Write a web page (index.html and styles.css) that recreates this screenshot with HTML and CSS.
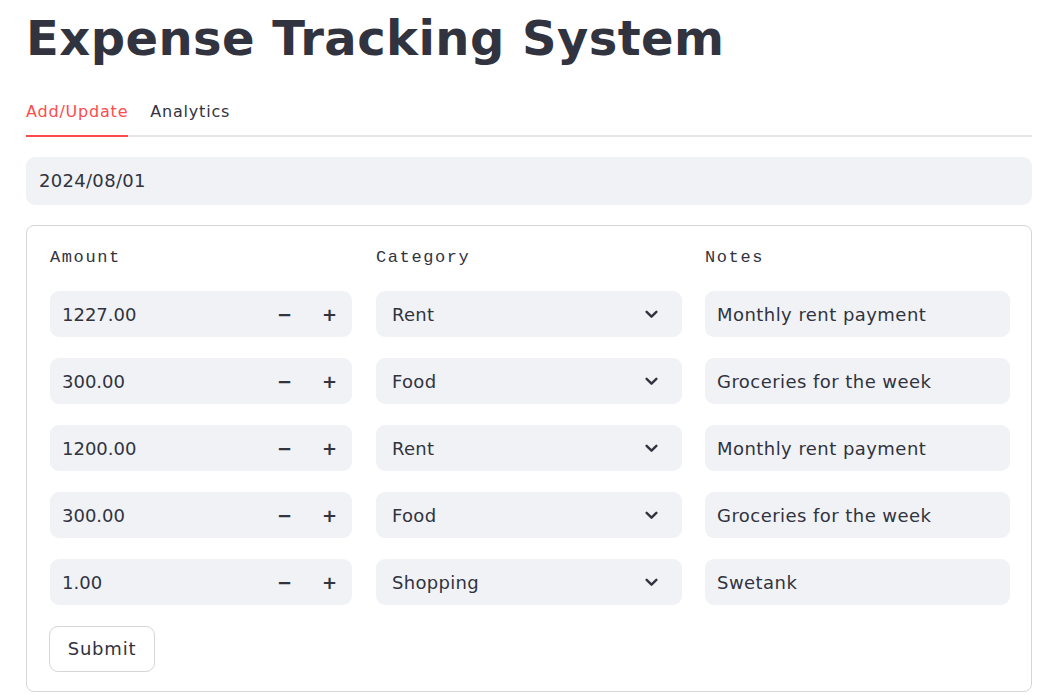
FILE: index.html
```html
<!DOCTYPE html>
<html>
<head>
<meta charset="utf-8">
<link rel="stylesheet" href="styles.css">
</head>
<body>
<div class="main">
  <h1 class="title">Expense Tracking System</h1>
  <div class="tabs">
    <div class="tab active">Add/Update</div>
    <div class="tab">Analytics</div>
  </div>
  <div class="date-input">2024/08/01</div>
  <div class="form">
    <div class="grid">
      <div class="label">Amount</div>
      <div class="label">Category</div>
      <div class="label note-col">Notes</div>

      <div class="field num"><span class="val">1227.00</span><span class="step">−</span><span class="step">+</span></div>
      <div class="field sel"><span class="val">Rent</span><svg class="chev" viewBox="0 0 12 8" width="13" height="9"><path d="M1.5 1.5 L6 6 L10.5 1.5" fill="none" stroke="#31333f" stroke-width="2.2" stroke-linecap="round" stroke-linejoin="round"/></svg></div>
      <div class="field txt">Monthly rent payment</div>

      <div class="field num"><span class="val">300.00</span><span class="step">−</span><span class="step">+</span></div>
      <div class="field sel"><span class="val">Food</span><svg class="chev" viewBox="0 0 12 8" width="13" height="9"><path d="M1.5 1.5 L6 6 L10.5 1.5" fill="none" stroke="#31333f" stroke-width="2.2" stroke-linecap="round" stroke-linejoin="round"/></svg></div>
      <div class="field txt">Groceries for the week</div>

      <div class="field num"><span class="val">1200.00</span><span class="step">−</span><span class="step">+</span></div>
      <div class="field sel"><span class="val">Rent</span><svg class="chev" viewBox="0 0 12 8" width="13" height="9"><path d="M1.5 1.5 L6 6 L10.5 1.5" fill="none" stroke="#31333f" stroke-width="2.2" stroke-linecap="round" stroke-linejoin="round"/></svg></div>
      <div class="field txt">Monthly rent payment</div>

      <div class="field num"><span class="val">300.00</span><span class="step">−</span><span class="step">+</span></div>
      <div class="field sel"><span class="val">Food</span><svg class="chev" viewBox="0 0 12 8" width="13" height="9"><path d="M1.5 1.5 L6 6 L10.5 1.5" fill="none" stroke="#31333f" stroke-width="2.2" stroke-linecap="round" stroke-linejoin="round"/></svg></div>
      <div class="field txt">Groceries for the week</div>

      <div class="field num"><span class="val">1.00</span><span class="step">−</span><span class="step">+</span></div>
      <div class="field sel"><span class="val">Shopping</span><svg class="chev" viewBox="0 0 12 8" width="13" height="9"><path d="M1.5 1.5 L6 6 L10.5 1.5" fill="none" stroke="#31333f" stroke-width="2.2" stroke-linecap="round" stroke-linejoin="round"/></svg></div>
      <div class="field txt">Swetank</div>
    </div>
    <div class="submit">Submit</div>
  </div>
</div>
</body>
</html>
```

FILE: styles.css
```css
* { box-sizing: border-box; }
body {
  margin: 0;
  background: #ffffff;
  color: #31333f;
  font-family: "DejaVu Sans", "Noto Sans", sans-serif;
}
.main {
  padding: 0 26px;
}
.title {
  margin: 0;
  padding-top: 6px;
  height: 90px;
  font-family: "DejaVu Sans", "Open Sans", sans-serif;
  font-weight: 700;
  font-size: 48px;
  letter-spacing: 0.45px;
  line-height: 64px;
  color: #31333f;
}
.tabs {
  display: flex;
  gap: 22px;
  border-bottom: 2px solid #e6e6ea;
  height: 47px;
}
.tab {
  font-size: 16px;
  letter-spacing: 0.8px;
  line-height: 44px;
  height: 47px;
  color: #31333f;
}
.tab.active {
  color: #ff4b4b;
  border-bottom: 2px solid #ff4b4b;
  margin-bottom: -2px;
}
.date-input {
  margin-top: 20px;
  height: 48px;
  background: #f0f2f6;
  border-radius: 9px;
  padding: 0 13px;
  font-size: 18px;
  letter-spacing: 0.3px;
  line-height: 48px;
}
.form {
  margin-top: 20px;
  border: 1px solid #d5d6da;
  border-radius: 8px;
  padding: 19px 22px 19px 23px;
  height: 467px;
}
.grid {
  display: grid;
  grid-template-columns: 302px 306px 304px;
  column-gap: 24px;
  row-gap: 21px;
}
.label {
  font-family: "Liberation Mono", "DejaVu Sans Mono", monospace;
  font-size: 17px;
  letter-spacing: 1.6px;
  line-height: 26px;
  margin-bottom: -1px;
}
.note-col { margin-left: -1px; }
.field {
  height: 46px;
  background: #f0f2f6;
  border-radius: 9px;
  display: flex;
  align-items: center;
  font-size: 18px;
}
.num { padding: 0 0 0 12px; }
.num .val { flex: 1; }
.step {
  width: 45px;
  text-align: center;
  font-weight: 700;
  font-size: 18px;
}
.sel { padding: 0 24px 0 16px; letter-spacing: 0.3px; }
.sel .val { flex: 1; }
.txt { padding: 0 13px 0 12px; margin-left: -1px; letter-spacing: 0.45px; }
.submit {
  margin-top: 21px;
  margin-left: -1px;
  width: 106px;
  height: 46px;
  border: 1px solid #d5d6da;
  border-radius: 9px;
  font-size: 18px;
  letter-spacing: 0.8px;
  line-height: 44px;
  text-align: center;
}
```
